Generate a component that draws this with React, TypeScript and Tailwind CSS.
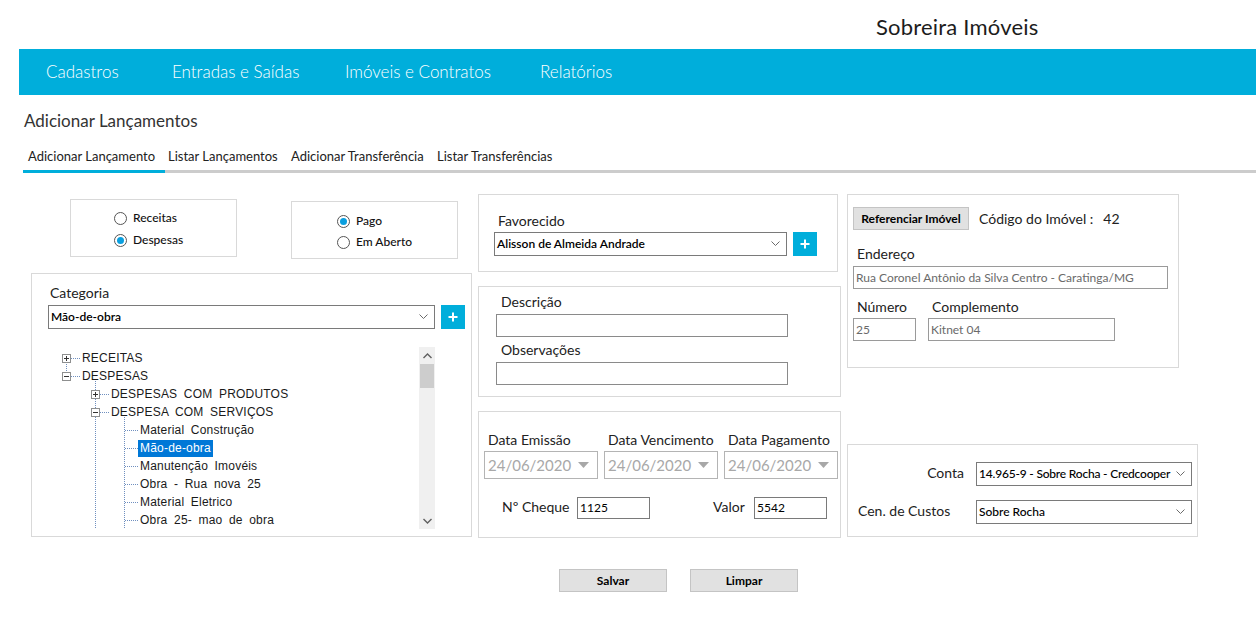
import React from "react";

function Chevron() {
  return (
    <svg width="9" height="6" viewBox="0 0 9 6">
      <polyline points="0.5,0.5 4.5,4.5 8.5,0.5" fill="none" stroke="#6b6b6b" strokeWidth="1" />
    </svg>
  );
}

function Select({ cls, text, textCls = "" }: { cls: string; text: string; textCls?: string }) {
  return (
    <div className={`h-[24px] border border-[#7a7a7a] bg-white flex items-center justify-between pl-[2px] pr-[6px] text-[12px] font-semibold text-black overflow-hidden ${cls}`}>
      <span className={`whitespace-nowrap ${textCls}`}>{text}</span>
      <span className="ml-[3px] shrink-0 flex items-center"><Chevron /></span>
    </div>
  );
}

function Plus() {
  return (
    <div className="w-[24px] h-[24px] bg-[#00aedb] flex items-center justify-center shrink-0">
      <svg width="10" height="10" viewBox="0 0 10 10">
        <path d="M5 0.5V9.5M0.5 5H9.5" stroke="#fff" strokeWidth="2" />
      </svg>
    </div>
  );
}

function Radio({ label, checked }: { label: string; checked?: boolean }) {
  return (
    <div className="flex items-center h-[18px] gap-[6px]">
      <span className="w-[13px] h-[13px] rounded-full border border-[#555] bg-white flex items-center justify-center">
        {checked && <span className="w-[7px] h-[7px] rounded-full bg-[#0a9fdf]" />}
      </span>
      <span className="text-[12px] font-medium text-[#111]">{label}</span>
    </div>
  );
}

function DateBox() {
  return (
    <div className="h-[28px] border border-[#b4b4b4] bg-white flex items-center justify-between pl-[3px] pr-[8px] text-[15px] text-[#a8a8a8]">
      <span>24/06/2020</span>
      <svg width="11" height="6" viewBox="0 0 11 6">
        <path d="M0 0H11L5.5 6Z" fill="#a8a8a8" />
      </svg>
    </div>
  );
}

const treeRows = [
  { lvl: 0, text: "RECEITAS" },
  { lvl: 0, text: "DESPESAS" },
  { lvl: 1, text: "DESPESAS COM PRODUTOS" },
  { lvl: 1, text: "DESPESA COM SERVIÇOS" },
  { lvl: 2, text: "Material Construção" },
  { lvl: 2, text: "Mão-de-obra", sel: true },
  { lvl: 2, text: "Manutenção Imovéis" },
  { lvl: 2, text: "Obra - Rua nova 25" },
  { lvl: 2, text: "Material Eletrico" },
  { lvl: 2, text: "Obra 25- mao de obra" },
];

const lvlPad = ["pl-[34px]", "pl-[63px]", "pl-[90px]"];

function Box({ cx, cy, plus }: { cx: number; cy: number; plus: boolean }) {
  return (
    <g>
      <rect x={cx - 4 + 0.5} y={cy - 4 + 0.5} width={8} height={8} fill="#fff" stroke="#8e8f8f" strokeWidth="1" />
      <line x1={cx - 2} x2={cx + 3} y1={cy + 0.5} y2={cy + 0.5} stroke="#333" strokeWidth="1" />
      {plus && <line x1={cx + 0.5} x2={cx + 0.5} y1={cy - 2} y2={cy + 3} stroke="#333" strokeWidth="1" />}
    </g>
  );
}

function TreeLines() {
  const dot = { stroke: "#6f8fbf", strokeWidth: 1, strokeDasharray: "1 1" };
  const l2 = [4, 5, 6, 7, 8, 9].map((i) => 11 + 18 * i);
  return (
    <svg className="absolute left-0 top-0" width="371" height="182" viewBox="0 0 371 182">
      <line x1="18.5" x2="18.5" y1="15" y2="25" {...dot} />
      <line x1="47.5" x2="47.5" y1="34" y2="182" {...dot} />
      <line x1="76.5" x2="76.5" y1="70" y2="182" {...dot} />
      <line x1="23" x2="33" y1="11.5" y2="11.5" {...dot} />
      <line x1="23" x2="33" y1="29.5" y2="29.5" {...dot} />
      <line x1="52" x2="62" y1="47.5" y2="47.5" {...dot} />
      <line x1="52" x2="62" y1="65.5" y2="65.5" {...dot} />
      {l2.map((y) => (
        <line key={y} x1="77" x2="90" y1={y + 0.5} y2={y + 0.5} {...dot} />
      ))}
      <Box cx={18} cy={11} plus />
      <Box cx={18} cy={29} plus={false} />
      <Box cx={47} cy={47} plus />
      <Box cx={47} cy={65} plus={false} />
    </svg>
  );
}

function Tree() {
  return (
    <div className="flex w-[387px] h-[182px] mt-[18px] ml-[16px]">
      <div className="relative w-[371px] h-[182px] overflow-hidden pt-[2px]">
        <TreeLines />
        {treeRows.map((r, i) => (
          <div key={i} className={`relative h-[18px] flex items-center ${lvlPad[r.lvl]}`}>
            <span
              className={`font-['Liberation_Sans',sans-serif] text-[12px] tracking-[0.2px] [word-spacing:3px] leading-[17px] ${
                r.lvl === 2 ? "px-[2px]" : ""
              } ${r.sel ? "bg-[#0078d7] text-white" : "text-[#1a1a1a]"}`}
            >
              {r.text}
            </span>
          </div>
        ))}
      </div>
      <div className="w-[16px] h-[182px] bg-[#f0f0f0] flex flex-col items-center">
        <div className="h-[17px] flex items-center justify-center">
          <svg width="9" height="6" viewBox="0 0 9 6">
            <polyline points="0.5,5 4.5,1 8.5,5" fill="none" stroke="#606060" strokeWidth="1.4" />
          </svg>
        </div>
        <div className="w-[14px] h-[24px] bg-[#cdcdcd]" />
        <div className="flex-1" />
        <div className="h-[17px] flex items-center justify-center">
          <svg width="9" height="6" viewBox="0 0 9 6">
            <polyline points="0.5,1 4.5,5 8.5,1" fill="none" stroke="#606060" strokeWidth="1.4" />
          </svg>
        </div>
      </div>
    </div>
  );
}

function GrayBtn({ cls, text }: { cls: string; text: string }) {
  return (
    <div className={`h-[23px] bg-[#e1e1e1] border border-[#c4c4c4] flex items-center justify-center text-[12px] font-bold text-black ${cls}`}>
      {text}
    </div>
  );
}

export default function App() {
  return (
    <div className="w-[1256px] h-[617px] bg-white overflow-hidden font-['Lato',sans-serif] text-[#262626]">
      {/* header */}
      <div className="h-[49px] pt-[13px] pl-[876px]">
        <span className="text-[22px] leading-[28px] text-[#1c1c1c] tracking-[0.2px]">Sobreira Imóveis</span>
      </div>
      <div className="ml-[19px] h-[46px] bg-[#00aedb] flex items-center pl-[27px] text-white text-[17px] font-light">
        <span className="w-[126px]">Cadastros</span>
        <span className="w-[173px]">Entradas e Saídas</span>
        <span className="w-[195px]">Imóveis e Contratos</span>
        <span>Relatórios</span>
      </div>

      {/* page title */}
      <div className="mt-[14px] pl-[24px] text-[17px] leading-[24px] text-[#333]">Adicionar Lançamentos</div>

      {/* tabs */}
      <div className="mt-[14px] ml-[23px] flex border-b-[3px] border-[#cccccc] text-[13px] text-[#222]">
        <div className="w-[142px] pl-[5px] pb-[5px] leading-[18px] border-b-[3px] border-[#00aedb] -mb-[3px]">Adicionar Lançamento</div>
        <div className="w-[123px] pl-[3px] leading-[18px]">Listar Lançamentos</div>
        <div className="w-[146px] pl-[3px] leading-[18px]">Adicionar Transferência</div>
        <div className="pl-[3px] leading-[18px]">Listar Transferências</div>
      </div>

      {/* content */}
      <div className="mt-[21px] pl-[31px] flex gap-[6px] items-start">
        {/* col 1 */}
        <div className="w-[441px] flex flex-col">
          <div className="flex items-start h-[65px]">
            <div className="ml-[39px] mt-[5px] w-[167px] h-[58px] border border-[#d9d9d9] pt-[9px] pl-[43px] flex flex-col gap-[4px]">
              <Radio label="Receitas" />
              <Radio label="Despesas" checked />
            </div>
            <div className="ml-[54px] mt-[7px] w-[167px] h-[58px] border border-[#d9d9d9] pt-[10px] pl-[45px] flex flex-col gap-[3px]">
              <Radio label="Pago" checked />
              <Radio label="Em Aberto" />
            </div>
          </div>
          <div className="mt-[14px] w-[441px] h-[264px] border border-[#d9d9d9] pt-[10px]">
            <div className="pl-[18px] text-[14px] leading-[18px] text-[#222]">Categoria</div>
            <div className="mt-[3px] ml-[16px] flex gap-[6px]">
              <Select cls="w-[387px]" text="Mão-de-obra" />
              <Plus />
            </div>
            <Tree />
          </div>
        </div>

        {/* col 2 */}
        <div className="w-[363px] flex flex-col">
          <div className="w-[360px] h-[78px] border border-[#d9d9d9] pt-[17px] pl-[15px]">
            <div className="pl-[4px] text-[14px] leading-[18px] text-[#222]">Favorecido</div>
            <div className="mt-[2px] flex gap-[6px]">
              <Select cls="w-[293px]" text="Alisson de Almeida Andrade" />
              <Plus />
            </div>
          </div>
          <div className="mt-[14px] w-[363px] h-[111px] border border-[#d9d9d9] pt-[6px] pl-[17px]">
            <div className="pl-[5px] text-[14px] leading-[18px] text-[#222]">Descrição</div>
            <div className="mt-[3px] w-[292px] h-[23px] border border-[#8a8a8a] bg-white" />
            <div className="mt-[4px] pl-[5px] text-[14px] leading-[18px] text-[#222]">Observações</div>
            <div className="mt-[3px] w-[292px] h-[23px] border border-[#8a8a8a] bg-white" />
          </div>
          <div className="mt-[14px] w-[363px] h-[127px] border border-[#d9d9d9] pt-[19px] pl-[5px]">
            <div className="grid grid-cols-[114px_114px_114px] gap-x-[6px] text-[14px] leading-[18px] text-[#222]">
              <div className="pl-[4px]">Data Emissão</div>
              <div className="pl-[4px]">Data Vencimento</div>
              <div className="pl-[4px]">Data Pagamento</div>
            </div>
            <div className="mt-[2px] grid grid-cols-[114px_114px_114px] gap-x-[6px]">
              <DateBox />
              <DateBox />
              <DateBox />
            </div>
            <div className="mt-[18px] flex items-center text-[14px] text-[#222]">
              <span className="w-[93px] pl-[18px] leading-[18px] -mt-[2px]">Nº Cheque</span>
              <div className="w-[73px] h-[22px] border border-[#7a7a7a] bg-white flex items-center pl-[2px] text-[12px] text-black">1125</div>
              <span className="ml-[63px] w-[41px] leading-[18px] -mt-[2px]">Valor</span>
              <div className="w-[73px] h-[22px] border border-[#7a7a7a] bg-white flex items-center pl-[2px] text-[12px] text-black">5542</div>
            </div>
          </div>
        </div>

        {/* col 3 */}
        <div className="w-[351px] flex flex-col">
          <div className="w-[332px] h-[174px] border border-[#d9d9d9] pt-[12px] pl-[5px]">
            <div className="flex items-center">
              <GrayBtn cls="w-[116px]" text="Referenciar Imóvel" />
              <span className="ml-[10px] text-[14px] text-[#222]">Código do Imóvel :</span>
              <span className="ml-[10px] text-[14px] text-[#222]">42</span>
            </div>
            <div className="mt-[15px] pl-[4px] text-[14px] leading-[18px] text-[#222]">Endereço</div>
            <div className="mt-[3px] w-[315px] h-[23px] border border-[#9a9a9a] bg-white flex items-center pl-[2px] text-[12px] text-[#6a6a6a] whitespace-nowrap">
              Rua Coronel Antônio da Silva Centro - Caratinga/MG
            </div>
            <div className="mt-[9px] flex gap-[12px] text-[14px] leading-[18px] text-[#222]">
              <div className="w-[63px] pl-[4px]">Número</div>
              <div className="pl-[4px]">Complemento</div>
            </div>
            <div className="mt-[2px] flex gap-[12px]">
              <div className="w-[63px] h-[23px] border border-[#9a9a9a] bg-white flex items-center pl-[2px] text-[12px] text-[#6a6a6a]">25</div>
              <div className="w-[187px] h-[23px] border border-[#9a9a9a] bg-white flex items-center pl-[2px] text-[12px] text-[#6a6a6a]">Kitnet 04</div>
            </div>
          </div>
          <div className="mt-[76px] w-[351px] h-[93px] border border-[#d9d9d9] pt-[17px]">
            <div className="flex items-center">
              <span className="w-[116px] text-right text-[14px] text-[#222] leading-[18px] -mt-[3px]">Conta</span>
              <Select cls="ml-[12px] w-[216px]" text="14.965-9 - Sobre Rocha - Credcooper" textCls="font-medium tracking-[-0.2px]" />
            </div>
            <div className="mt-[14px] flex items-center">
              <span className="w-[128px] pl-[10px] text-[14px] text-[#222] leading-[18px] -mt-[2px]">Cen. de Custos</span>
              <Select cls="w-[216px]" text="Sobre Rocha" textCls="font-medium" />
            </div>
          </div>
        </div>
      </div>

      {/* bottom buttons */}
      <div className="mt-[31px] pl-[559px] flex gap-[23px]">
        <GrayBtn cls="w-[108px]" text="Salvar" />
        <GrayBtn cls="w-[108px]" text="Limpar" />
      </div>
    </div>
  );
}
